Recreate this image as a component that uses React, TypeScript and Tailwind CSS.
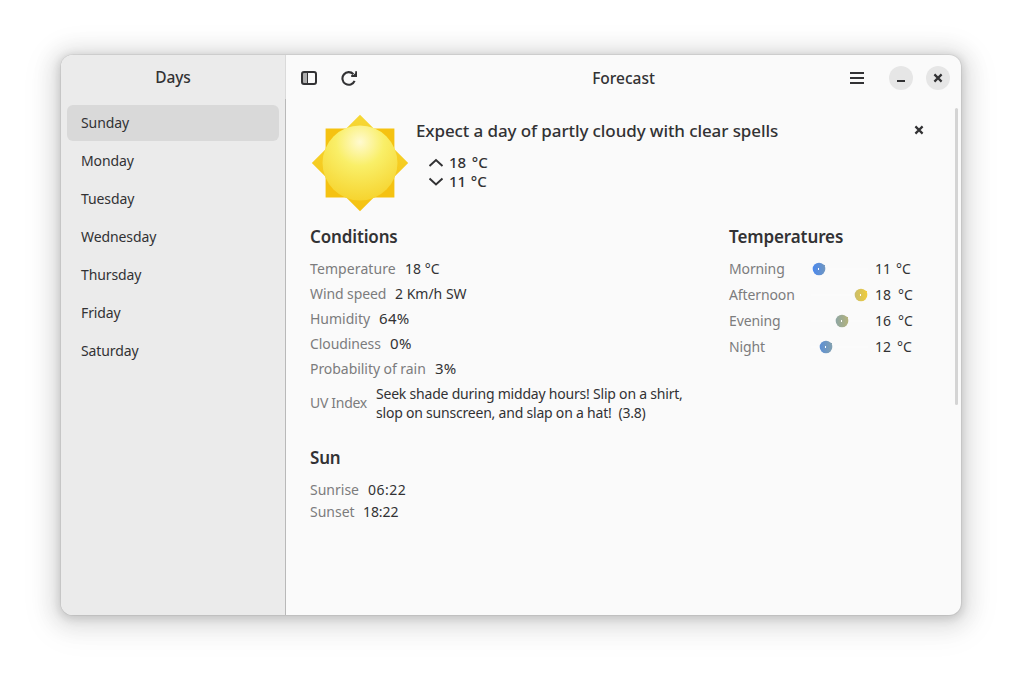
import React from "react";

const days = ["Sunday", "Monday", "Tuesday", "Wednesday", "Thursday", "Friday", "Saturday"];

const conditions = [
  { label: "Temperature", value: "18 °C", w: "w-[95px]", track: "tracking-[0.1px]", vt: "tracking-normal" },
  { label: "Wind speed", value: "2 Km/h SW", w: "w-[85px]", track: "tracking-[-0.1px]", vt: "tracking-normal" },
  { label: "Humidity", value: "64%", w: "w-[69px]", track: "tracking-normal", vt: "text-[15px] tracking-[0.3px]" },
  { label: "Cloudiness", value: "0%", w: "w-[80px]", track: "tracking-[-0.1px]", vt: "text-[15px] tracking-[0.3px]" },
  { label: "Probability of rain", value: "3%", w: "w-[125px]", track: "tracking-[-0.05px]", vt: "text-[15px] tracking-[0.2px]" },
];

const temperatures = [
  { label: "Morning", value: "11", from: "#4a88ee", to: "#7096c0", x: 8, gap: "pl-[5px]" },
  { label: "Afternoon", value: "18", from: "#c9bd6c", to: "#f0cc3c", x: 50, gap: "pl-[7px]" },
  { label: "Evening", value: "16", from: "#8ea6a4", to: "#b3b27c", x: 31, gap: "pl-[7px]" },
  { label: "Night", value: "12", from: "#5b8fd6", to: "#82a0b0", x: 15, gap: "pl-[6px]" },
];

function CloseIcon() {
  return (
    <svg width="16" height="16" viewBox="0 0 16 16" stroke="currentColor" strokeWidth="2.2">
      <path d="M4.4 4.4 11.6 11.6M11.6 4.4 4.4 11.6" />
    </svg>
  );
}

function SunIcon() {
  return (
    <svg width="98" height="98" viewBox="0 0 98 98" className="shrink-0">
      <defs>
        <radialGradient id="disc" cx="0.5" cy="0.22" r="0.8">
          <stop offset="0" stopColor="#fffad0" />
          <stop offset="0.4" stopColor="#f9ef68" />
          <stop offset="1" stopColor="#f6d32d" />
        </radialGradient>
        <linearGradient id="rays" x1="0" y1="0" x2="0" y2="1">
          <stop offset="0" stopColor="#f6d734" />
          <stop offset="1" stopColor="#f5c211" />
        </linearGradient>
      </defs>
      <path d="M14.6 14.6h68.8v68.8H14.6z" fill="#f5c211" />
      <path d="M49 .8 97.2 49 49 97.2.8 49z" fill="url(#rays)" />
      <circle cx="49" cy="49" r="37.5" fill="url(#disc)" />
    </svg>
  );
}

export default function App() {
  return (
    <div className="h-[682px] w-[1022px] overflow-hidden bg-white pl-[61px] pt-[55px] font-['Noto_Sans',sans-serif] text-[14px] leading-[19px] text-[#323234]">
      <div className="flex h-[560px] w-[900px] overflow-hidden rounded-xl bg-[#fafafa] shadow-[0_0_0_1px_rgba(0,0,0,0.05),0_2px_8px_2px_rgba(0,0,0,0.13),0_3px_20px_10px_rgba(0,0,0,0.09),0_6px_32px_16px_rgba(0,0,0,0.04)]">
        <aside className="flex w-[225px] shrink-0 flex-col bg-[#ebebeb]">
          <header className="flex h-[44px] items-center justify-center border-r border-[#dadada] text-[15.5px] font-medium tracking-[-0.15px]">
            Days
          </header>
          <nav className="flex flex-1 flex-col gap-[2px] border-r border-[#b9b9b9] px-1.5 pt-[6px]">
            {days.map((d, i) => (
              <div key={d} className={`flex h-9 items-center rounded-md pb-[2px] pl-3.5 ${i === 0 ? "bg-[#d9d9d9]" : ""}`}>
                <span className="tracking-[-0.1px]">{d}</span>
              </div>
            ))}
          </nav>
        </aside>
        <main className="flex flex-1 flex-col">
          <header className="flex h-[46px] items-center">
            <div className="flex w-[200px] gap-6 pl-[15px]">
              <svg width="16" height="16" viewBox="0 0 16 16">
                <path d="M2 2.5h4v11H2z" fill="#adadad" />
                <rect x="1" y="2" width="14" height="12" rx="2" fill="none" stroke="#323234" strokeWidth="2" />
                <path d="M6.5 2v12" stroke="#323234" />
              </svg>
              <svg width="16" height="16" viewBox="0 0 16 16" fill="none" stroke="#323234" strokeWidth="2.1">
                <path d="M12.4 4.2A6.3 6.3 0 1 0 13.6 10.8" />
                <path d="M16 1.2V7h-5.8V5h2.2L14.2 3.2V1.2z" fill="#323234" stroke="none" />
              </svg>
            </div>
            <div className="flex-1 text-center text-[15.5px] font-medium">Forecast</div>
            <div className="flex w-[200px] items-center justify-end pr-[11px]">
              <svg width="16" height="16" viewBox="0 0 16 16" className="mr-6" fill="#323234">
                <path d="M1 2h14v2H1zM1 7h14v2H1zM1 12h14v2H1z" />
              </svg>
              <div className="mr-[13px] grid size-6 place-items-center rounded-full bg-[#e6e6e6]">
                <svg width="16" height="16" viewBox="0 0 16 16" fill="#323234"><path d="M4 10h8v2H4z" /></svg>
              </div>
              <div className="grid size-6 place-items-center rounded-full bg-[#e6e6e6]"><CloseIcon /></div>
            </div>
          </header>
          <section className="flex flex-1 justify-between pr-[3px] pt-px">
            <div className="flex flex-col pl-[24px] pt-[12px]">
              <div className="flex pl-px">
                <SunIcon />
                <div className="flex flex-col pl-[7px] pt-[5px]">
                  <h1 className="w-[495px] whitespace-nowrap text-[17px] font-medium leading-[24px] tracking-[-0.1px]">Expect a day of partly cloudy with clear spells</h1>
                  <div className="flex flex-col pl-3 pt-[10px] text-[15px] font-medium">
                    {[["18", "M1.5 11 8 5l6.5 6", "pl-[6px]"], ["11", "M1.5 4.5 8 10.5l6.5-6", "pl-[5px]"]].map(([v, d, gap]) => (
                      <div key={v} className="flex h-[19px] items-center">
                        <svg width="16" height="16" viewBox="0 0 16 16" fill="none" stroke="#323234" strokeWidth="2"><path d={d} /></svg>
                        <span className="pl-[5px] tracking-[-0.2px]">{v}</span>
                        <span className={gap}>°C</span>
                      </div>
                    ))}
                  </div>
                </div>
                <div className="pt-[8px]"><CloseIcon /></div>
              </div>
              <div className="flex pt-[13px]">
                <div className="w-[419px]">
                  <h2 className="text-[17px] font-semibold leading-[24px] tracking-[-0.15px]">Conditions</h2>
                  <div className="pt-[7px]">
                    {conditions.map((c) => (
                      <div key={c.label} className="flex h-[25px] items-center whitespace-nowrap">
                        <span className={`${c.w} ${c.track} text-[#7c7c7d]`}>{c.label}</span>
                        <span className={c.vt}>{c.value}</span>
                      </div>
                    ))}
                    <div className="flex h-[44px] items-center whitespace-nowrap">
                      <span className="w-[66px] pb-[2px] tracking-[-0.3px] text-[#7c7c7d]">UV Index</span>
                      <div className="tracking-[-0.21px]">
                        <p>Seek shade during midday hours! Slip on a shirt,</p>
                        <p>slop on sunscreen, and slap on a hat!&nbsp; (3.8)</p>
                      </div>
                    </div>
                  </div>
                  <h2 className="pt-[21px] text-[17px] font-semibold leading-[24px] tracking-[-0.2px]">Sun</h2>
                  <div className="pt-[8px]">
                    <div className="flex h-[22px] items-center"><span className="w-[58px] text-[#7c7c7d]">Sunrise</span><span className="tracking-[0.5px]">06:22</span></div>
                    <div className="flex h-[22px] items-center"><span className="w-[53px] text-[#7c7c7d]">Sunset</span><span className="tracking-[-0.1px]">18:22</span></div>
                  </div>
                </div>
                <div>
                  <h2 className="text-[17px] font-semibold leading-[24px] tracking-[-0.1px]">Temperatures</h2>
                  <div className="pt-[6px]">
                    {temperatures.map((t) => (
                      <div key={t.label} className="flex h-[26px] items-center">
                        <span className="w-[82px] tracking-[-0.12px] text-[#7c7c7d]">{t.label}</span>
                        <svg width="64" height="16" viewBox="0 0 64 16" className="mt-[2px]">
                          <defs>
                            <linearGradient id={t.label}><stop stopColor={t.from} /><stop offset="1" stopColor={t.to} /></linearGradient>
                          </defs>
                          <path d="M0 7.5h57v1H0z" fill="#fcfcfc" />
                          <circle cx={t.x} cy="8" r="6.3" fill={`url(#${t.label})`} />
                          <path d={`M${t.x + 3} 4h3v2z`} fill={t.to} />
                          <path d={`M${t.x - 1} 7h1v2h-1z`} fill="white" />
                        </svg>
                        <span>{t.value}</span>
                        <span className={t.gap}>°C</span>
                      </div>
                    ))}
                  </div>
                </div>
              </div>
            </div>
            <div className="mt-[6px] h-[297px] w-[3px] rounded-full bg-[#d4d4d4]" />
          </section>
        </main>
      </div>
    </div>
  );
}
